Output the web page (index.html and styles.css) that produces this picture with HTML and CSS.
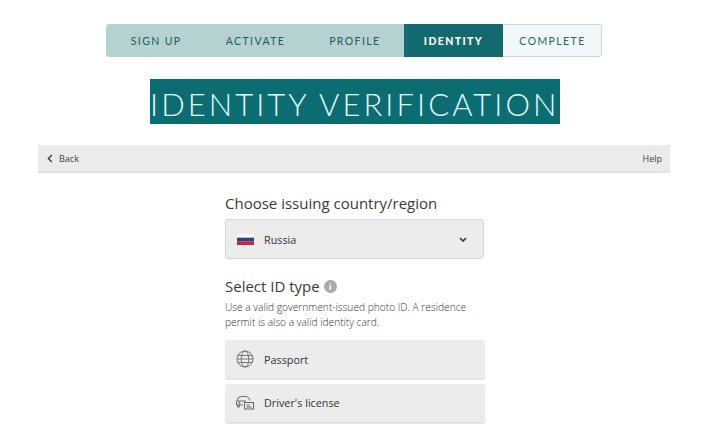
FILE: index.html
```html
<!DOCTYPE html>
<html lang="en">
<head>
<meta charset="utf-8">
<title>Identity verification</title>
<link rel="stylesheet" href="styles.css">
</head>
<body>
<nav class="steps">
  <span class="step done">SIGN UP</span>
  <span class="step done">ACTIVATE</span>
  <span class="step done">PROFILE</span>
  <span class="step current">IDENTITY</span>
  <span class="step todo">COMPLETE</span>
</nav>
<div class="title-wrap"><h1 class="title">IDENTITY VERIFICATION</h1></div>
<div class="toolbar">
  <a class="back"><svg class="back-icon" width="6" height="9" viewBox="0 0 6 9"><path d="M4.8 1 1.4 4.5 4.8 8" fill="none" stroke="#444" stroke-width="1.5"/></svg>Back</a>
  <a class="help">Help</a>
</div>
<main class="content">
  <h2 class="heading">Choose issuing country/region</h2>
  <div class="select">
    <svg class="flag" width="17" height="11" viewBox="0 0 17 11"><rect width="17" height="3.7" fill="#f6f6f8"/><rect y="3.7" width="17" height="3.6" fill="#2f3f8f"/><rect y="7.3" width="17" height="3.7" fill="#c4283c"/></svg>
    <span class="select-label">Russia</span>
    <svg class="chevron" width="8" height="5" viewBox="0 0 8 5"><path d="M1 1 4 4 7 1" fill="none" stroke="#333" stroke-width="1.6"/></svg>
  </div>
  <h2 class="heading heading-id">Select ID type<span class="info">i</span></h2>
  <p class="hint">Use a valid government-issued photo ID. A residence permit is also a valid identity card.</p>
  <div class="option">
    <svg class="opt-icon" width="20" height="20" viewBox="0 0 20 20" fill="none" stroke="#777" stroke-width="1"><circle cx="10" cy="10" r="8"/><ellipse cx="10" cy="10" rx="3.8" ry="8"/><path d="M2.8 6.5h14.4M2.8 13.5h14.4M2 10h16"/></svg>
    <span>Passport</span>
  </div>
  <div class="option option-car">
    <svg class="opt-icon" width="20" height="20" viewBox="0 0 20 20" fill="none" stroke="#666" stroke-width="1"><path d="M1.5 12V8.5L3.5 4.5C5 3 12 3 13.5 4.5L15 7.5M2 8h9M1.5 12H8M2.5 12v2h2v-2"/><circle cx="4.5" cy="10" r=".7"/><rect x="9.5" y="9.5" width="9" height="6.5" fill="#ececec"/><path d="M11.5 12h3M11.5 14h5"/></svg>
    <span>Driver's license</span>
  </div>
</main>
</body>
</html>
```
FILE: styles.css
```css
* { box-sizing: border-box; }
html, body { margin: 0; background: #fff; }
body { font-family: "Open Sans", "Noto Sans", sans-serif; color: #333; padding-top: 24px; }

.steps {
  display: flex;
  width: 496px;
  height: 33px;
  margin: 0 0 0 106px;
  border-radius: 3px;
  overflow: hidden;
  font-family: Lato, sans-serif;
  font-size: 10.5px;
  letter-spacing: 1.4px;
}
.step { flex: 0 0 99px; display: flex; align-items: center; justify-content: center; }
.done { flex-basis: 99.34px; padding-left: 1px; background: #b5d2d2; color: #24585c; }
.current { background: #136a6e; color: #fff; font-weight: 900; }
.todo { padding-left: 1px; background: #f2f7f8; color: #2c6266; border: 1px solid #c9d8da; border-left: 0; border-radius: 0 3px 3px 0; }

.title-wrap { display: flex; margin: 22px 0 0 150px; }
.title {
  margin: 0;
  height: 45px;
  padding: 6px 0 0;
  background: #0b6d72;
  color: #e0fbfb;
  font-family: Lato, sans-serif;
  font-weight: 300;
  font-size: 31px;
  line-height: 39px;
  letter-spacing: 3.05px;
  white-space: nowrap;
}

.toolbar {
  display: flex;
  justify-content: space-between;
  align-items: center;
  width: 632px;
  height: 28px;
  margin: 21px 0 0 38px;
  padding: 0 8px 0 9px;
  background: #ebebeb;
  border-bottom: 2px solid #e2e2e2;
  font-size: 9px;
  color: #444;
}
.back { display: flex; align-items: center; }
.back-icon { margin-right: 6px; }

.content { width: 260px; margin: 20px 0 0 225px; }
.heading { margin: 0; font-size: 15px; font-weight: 400; line-height: 21px; color: #3a3a3a; }
.select {
  display: flex;
  align-items: center;
  height: 40px;
  margin: 5px 1px 0 0;
  padding: 0 16px 0 11px;
  background: #ececec;
  border: 1px solid #d6d6d6;
  border-radius: 3px;
  font-size: 10.8px;
}
.flag { margin-right: 10px; }
.select-label { flex: 1; }
.heading-id { display: flex; align-items: center; gap: 4px; margin-top: 17px; }
.info {
  display: inline-flex;
  align-items: center;
  justify-content: center;
  width: 13px;
  height: 13px;
  border-radius: 50%;
  background: #a9a9a9;
  color: #fff;
  font-size: 9px;
  font-weight: 700;
}
.hint { margin: 3px 0 0; font-size: 10.2px; font-weight: 300; line-height: 15px; color: #333; }
.option {
  display: flex;
  align-items: center;
  height: 40px;
  margin-top: 4px;
  padding-left: 10px;
  background: #ececec;
  border-bottom: 2px solid #e4e4e4;
  border-radius: 3px;
  font-size: 10.8px;
}
.hint + .option { margin-top: 10px; }
.option-car span { margin-top: -1px; }
.opt-icon { margin-right: 9px; }
```
